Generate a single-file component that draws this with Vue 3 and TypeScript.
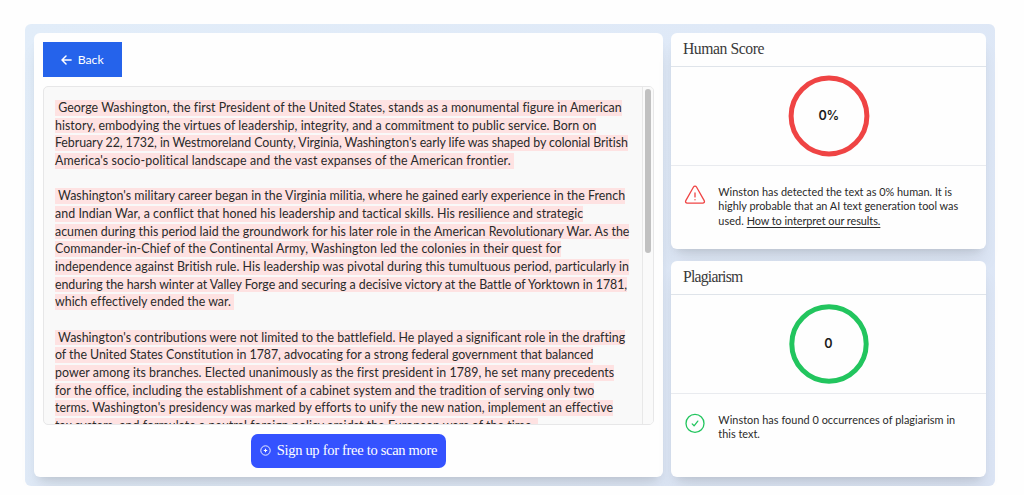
<script setup lang="ts">
import type { Directive } from 'vue'

interface Line {
  text: string
  width: number
}

const paragraphs: Line[][] = [
  [
    { text: ' George Washington, the first President of the United States, stands as a monumental figure in American', width: 566.3 },
    { text: 'history, embodying the virtues of leadership, integrity, and a commitment to public service. Born on', width: 541.5 },
    { text: "February 22, 1732, in Westmoreland County, Virginia, Washington's early life was shaped by colonial British", width: 573 },
    { text: "America's socio-political landscape and the vast expanses of the American frontier. ", width: 459.5 },
  ],
  [
    { text: " Washington's military career began in the Virginia militia, where he gained early experience in the French", width: 570.3 },
    { text: 'and Indian War, a conflict that honed his leadership and tactical skills. His resilience and strategic', width: 528.6 },
    { text: 'acumen during this period laid the groundwork for his later role in the American Revolutionary War. As the', width: 574.6 },
    { text: 'Commander-in-Chief of the Continental Army, Washington led the colonies in their quest for', width: 506.5 },
    { text: 'independence against British rule. His leadership was pivotal during this tumultuous period, particularly in', width: 574.3 },
    { text: 'enduring the harsh winter at Valley Forge and securing a decisive victory at the Battle of Yorktown in 1781,', width: 571.7 },
    { text: 'which effectively ended the war. ', width: 178.9 },
  ],
  [
    { text: " Washington's contributions were not limited to the battlefield. He played a significant role in the drafting", width: 569.3 },
    { text: 'of the United States Constitution in 1787, advocating for a strong federal government that balanced', width: 539 },
    { text: 'power among its branches. Elected unanimously as the first president in 1789, he set many precedents', width: 559 },
    { text: 'for the office, including the establishment of a cabinet system and the tradition of serving only two', width: 539 },
    { text: "terms. Washington's presidency was marked by efforts to unify the new nation, implement an effective", width: 557.7 },
    { text: 'tax system, and formulate a neutral foreign policy amidst the European wars of the time. ', width: 483 },
  ],
]

// Tracks a run of text so that it fills the given width in pixels.
const vFit: Directive<HTMLElement, number> = {
  mounted(el, { value }) {
    el.style.letterSpacing = '0px'
    const natural = el.getBoundingClientRect().width
    const count = (el.textContent ?? '').length
    el.style.letterSpacing = `${(value - natural) / count}px`
  },
}
</script>

<template>
  <div class="shell">
    <main class="card editor">
      <button class="back">
        <svg width="11" height="10" viewBox="0 0 11 10" fill="none" stroke="currentColor" stroke-width="1.5" stroke-linecap="round" stroke-linejoin="round">
          <path d="M10.1 5H1M5 1 1 5l4 4" />
        </svg>
        <span v-fit="26" class="run">Back</span>
      </button>
      <div class="scroller">
        <div class="text">
          <p v-for="(lines, p) in paragraphs" :key="p" class="paragraph">
            <span v-for="(line, i) in lines" :key="i" class="line">
              <mark v-fit="line.width" class="run">{{ line.text }}</mark>
            </span>
          </p>
        </div>
        <div class="track"><div class="thumb"></div></div>
      </div>
      <button class="signup">
        <svg width="11" height="11" viewBox="0 0 11 11" fill="none" stroke="currentColor" stroke-width="0.9">
          <circle cx="5.5" cy="5.5" r="4.7" />
          <path d="M5.5 3.8v3.4M3.8 5.5h3.4" stroke-width="1.1" />
        </svg>
        <span v-fit="160.5" class="run">Sign up for free to scan more</span>
      </button>
    </main>

    <aside class="side">
      <section class="card">
        <h2><span v-fit="81" class="run">Human Score</span></h2>
        <div class="gauge">
          <svg width="82" height="82" viewBox="0 0 82 82">
            <circle cx="41" cy="41" r="37.9" fill="none" stroke="#ef4444" stroke-width="5" />
          </svg>
          <strong><span v-fit="20.5" class="run">0%</span></strong>
        </div>
        <div class="note">
          <svg class="icon" width="22" height="22" viewBox="0 0 22 22" fill="none" stroke="#ef4444" stroke-width="1.3" stroke-linecap="round" stroke-linejoin="round">
            <path d="M9.5 3 1.8 16.6c-.7 1.3 0 2.6 1.5 2.6h15.4c1.5 0 2.2-1.3 1.5-2.6L12.5 3c-.7-1.3-2.3-1.3-3 0Z" />
            <path d="M11 9v3.9M11 15.7v.1" />
          </svg>
          <div class="message">
            <div><span v-fit="233.5" class="run">Winston has detected the text as 0% human. It is</span></div>
            <div><span v-fit="240" class="run">highly probable that an AI text generation tool was</span></div>
            <div class="mixed"><span v-fit="28.3" class="run">used. </span><a v-fit="133.7" class="run">How to interpret our results.</a></div>
          </div>
        </div>
      </section>

      <section class="card">
        <h2><span v-fit="59.5" class="run">Plagiarism</span></h2>
        <div class="gauge">
          <svg width="82" height="82" viewBox="0 0 82 82">
            <circle cx="41" cy="41" r="37.2" fill="none" stroke="#22c55e" stroke-width="5" />
          </svg>
          <strong><span v-fit="9" class="run">0</span></strong>
        </div>
        <div class="note">
          <svg class="icon" width="22" height="22" viewBox="0 0 22 22" fill="none" stroke="#22c55e" stroke-width="1.3" stroke-linecap="round" stroke-linejoin="round">
            <circle cx="11" cy="11.4" r="9" />
            <path d="m8.2 11.9 1.9 1.9 3.7-4.7" />
          </svg>
          <div class="message">
            <div><span v-fit="236.8" class="run">Winston has found 0 occurrences of plagiarism in</span></div>
            <div><span v-fit="41.5" class="run">this text.</span></div>
          </div>
        </div>
      </section>
    </aside>
  </div>
</template>

<style>
body {
  background: #fefefe;
  overflow: hidden;
}
</style>

<style scoped>
* {
  box-sizing: border-box;
}
.shell {
  display: grid;
  grid-template-columns: 629px 314.5px;
  gap: 8.8px;
  width: 970px;
  height: 461.5px;
  margin: 24.3px 0 0 24.7px;
  padding: 9px;
  border-radius: 6px;
  background: linear-gradient(135deg, #e2edf9, #dce5f5);
  font-family: Lato, "Open Sans", sans-serif;
  color: #2a2a2a;
}
.run {
  display: inline-block;
  white-space: pre;
}
.card {
  background: #fefefe;
  border-radius: 6px;
  box-shadow: 0 16px 20px -4px rgba(0, 0, 0, 0.08), 0 6px 9px -5px rgba(0, 0, 0, 0.12);
}
.editor {
  display: flex;
  flex-direction: column;
  height: 443.5px;
  padding: 9px;
}
button {
  display: flex;
  align-items: center;
  border: 0;
  color: #fff;
  font-family: inherit;
}
.back {
  width: 79.5px;
  height: 35px;
  gap: 6px;
  padding: 0 0 0 18px;
  background: #2563eb;
  font-size: 12.3px;
}
.scroller {
  display: flex;
  justify-content: space-between;
  width: 611px;
  height: 339px;
  margin-top: 9px;
  border: 1px solid #e7e7e8;
  border-radius: 5px;
  background: #f9f9f9;
  overflow: hidden;
}
.text {
  padding: 11.7px 0 0 11.3px;
  font-size: 12.4px;
}
.paragraph {
  margin: 0 0 17.68px;
}
.line {
  display: flex;
  align-items: center;
  height: 17.68px;
}
mark {
  height: 15.5px;
  line-height: 16px;
  background: #fee2e2;
  color: #2a2a2a;
}
.track {
  width: 11px;
  padding: 2px 0 0 2px;
  border-left: 1px solid #e8e8e8;
  background: #fafafa;
}
.thumb {
  width: 6px;
  height: 164px;
  border-radius: 3px;
  background: #c1c1c1;
}
.signup {
  align-self: center;
  width: 195px;
  height: 34px;
  margin-top: 9px;
  padding: 0 0 0 9px;
  gap: 6px;
  border-radius: 7px;
  background: #3452ff;
  font-family: "Liberation Serif", serif;
  font-size: 14.5px;
}
.side {
  display: flex;
  flex-direction: column;
  gap: 12px;
}
.side .card {
  height: 216px;
}
h2 {
  height: 33.4px;
  margin: 0;
  padding-left: 11.5px;
  border-bottom: 1px solid #dfe4ea;
  font: 400 15.7px/32px "Liberation Serif", serif;
  color: #3a3a3a;
}
.gauge {
  display: grid;
  place-items: center;
  height: 99.5px;
  border-bottom: 1px solid #e9ebef;
}
.gauge > * {
  grid-area: 1 / 1;
}
.gauge strong {
  font: 600 12.6px/16px Inter, sans-serif;
  color: #1c1c1c;
  padding-top: 1px;
}
.note {
  display: flex;
  gap: 12.7px;
  padding: 18px 0 0 12.2px;
  font-size: 10.9px;
  line-height: 14.7px;
}
.icon {
  flex: none;
}
.message {
  padding-top: 0.5px;
}
.mixed {
  display: flex;
}
a {
  text-decoration: underline;
  text-underline-offset: 1.5px;
}
</style>
